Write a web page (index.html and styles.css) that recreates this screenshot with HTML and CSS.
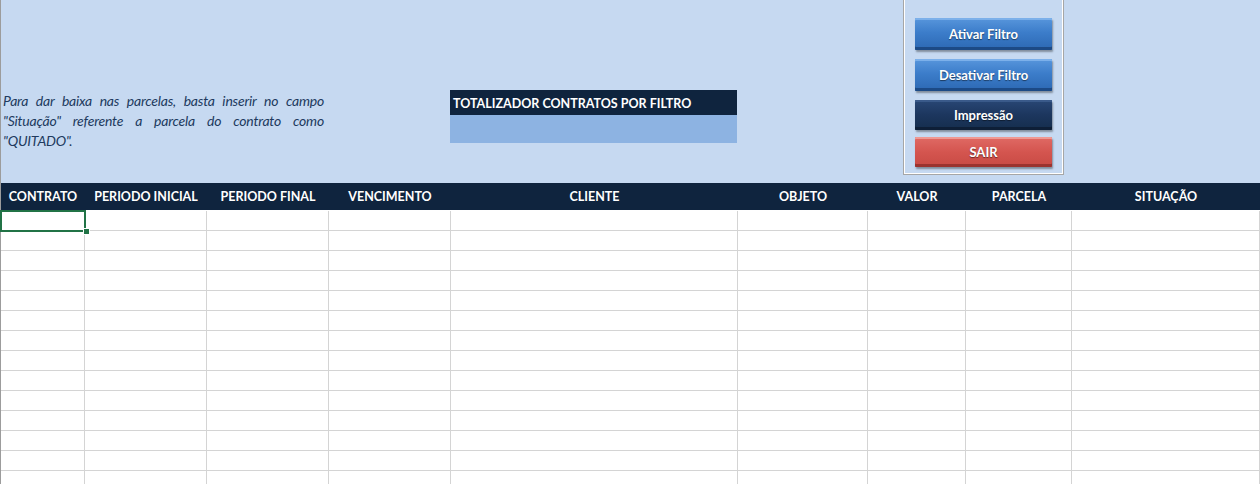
FILE: index.html
```html
<!DOCTYPE html>
<html lang="pt">
<head>
<meta charset="utf-8">
<title>Controle de Contratos</title>
<link rel="stylesheet" href="styles.css">
</head>
<body>
<div class="sheet">
  <div class="top">
    <p class="note">Para dar baixa nas parcelas, basta inserir no campo "Situação" referente a parcela do contrato como "QUITADO".</p>
    <div class="total">
      <div class="total-title">TOTALIZADOR CONTRATOS POR FILTRO</div>
      <div class="total-value"></div>
    </div>
    <div class="panel">
      <button class="btn btn-blue b1">Ativar Filtro</button>
      <button class="btn btn-blue b2">Desativar Filtro</button>
      <button class="btn btn-navy b3">Impressão</button>
      <button class="btn btn-red b4">SAIR</button>
    </div>
  </div>
  <div class="grid head">
    <div class="hc">CONTRATO</div>
    <div class="hc">PERIODO INICIAL</div>
    <div class="hc">PERIODO FINAL</div>
    <div class="hc">VENCIMENTO</div>
    <div class="hc">CLIENTE</div>
    <div class="hc">OBJETO</div>
    <div class="hc">VALOR</div>
    <div class="hc">PARCELA</div>
    <div class="hc">SITUAÇÃO</div>
  </div>
  <div class="grid body" id="body"></div>
</div>
<script>
  var b = document.getElementById('body');
  var html = '';
  for (var r = 0; r < 14; r++) {
    for (var c = 0; c < 9; c++) {
      html += '<div class="cell' + (r === 0 && c === 0 ? ' sel' : '') + '"></div>';
    }
  }
  b.innerHTML = html;
</script>
</body>
</html>
```
FILE: styles.css
```css
html, body {
  margin: 0;
  padding: 0;
  background: #ffffff;
  height: 484px;
  overflow: hidden;
}
.sheet {
  border-left: 1px solid #9c9c9c;
  height: 484px;
  font-family: Lato, "Open Sans", sans-serif;
}
.top {
  display: flex;
  align-items: flex-start;
  height: 183px;
  background: #c6d9f1;
}
.note {
  margin: 91px 0 0 2px;
  width: 321px;
  font-style: italic;
  font-size: 14px;
  letter-spacing: -0.2px;
  word-spacing: 0.5px;
  line-height: 20px;
  color: #213a5e;
  text-align: justify;
}
.total {
  margin: 90px 0 0 126px;
  width: 287px;
}
.total-title {
  height: 25px;
  box-sizing: border-box;
  padding: 2px 0 0 3px;
  background: #0f243e;
  color: #fff;
  font-weight: bold;
  font-size: 12.5px;
  line-height: 23px;
}
.total-value {
  height: 28px;
  background: #8db3e2;
}
.panel {
  margin-left: 166px;
  width: 161px;
  height: 175px;
  box-sizing: border-box;
  border: 1px solid #a6a6a6;
  border-top: none;
  box-shadow: inset 1px 0 0 #ffffff, inset -1px -1px 0 #ffffff;
  display: flex;
  flex-direction: column;
  padding: 18px 0 0 11px;
}
.btn {
  width: 137px;
  border: none;
  padding: 0;
  font-family: Lato, "Open Sans", sans-serif;
  font-weight: bold;
  font-size: 13px;
  color: #ffffff;
  text-shadow: 0 1px 1px rgba(0,0,0,0.5);
  border-radius: 1px;
}
.btn-blue {
  height: 32px;
  background: linear-gradient(#5896dc 0%, #3c7dca 45%, #2c68b3 100%);
  box-shadow: inset 0 2px 0 #7cb0ea, inset 0 -3px 0 #1c4a86, 1px 2px 2px rgba(0,0,0,0.35);
}
.btn-navy {
  height: 30px;
  background: linear-gradient(#294775 0%, #1c365e 50%, #152e4d 100%);
  box-shadow: inset 0 2px 0 #3a5a8a, inset 0 -3px 0 #0e1f37, 1px 2px 2px rgba(0,0,0,0.35);
}
.btn-red {
  height: 30px;
  background: linear-gradient(#e06a65 0%, #d4554f 50%, #c84a44 100%);
  box-shadow: inset 0 2px 0 #ee9893, inset 0 -3px 0 #9b332f, 1px 2px 2px rgba(0,0,0,0.35);
}
.b2 { margin-top: 9px; }
.b3 { margin-top: 9px; }
.b4 { margin-top: 7px; }
.grid {
  display: grid;
  grid-template-columns: 84px 122px 122px 122px 287px 130px 98px 106px 1fr;
}
.head {
  height: 27px;
  background: #0f243e;
}
.hc {
  color: #ffffff;
  font-weight: bold;
  font-size: 12.5px;
  line-height: 28px;
  text-align: center;
  white-space: nowrap;
}
.body {
  grid-auto-rows: 20px;
  padding-top: 1px;
}
.cell {
  box-sizing: border-box;
  border-right: 1px solid #d4d4d4;
  border-bottom: 1px solid #d4d4d4;
}
.sel {
  position: relative;
}
.sel::before {
  content: "";
  position: absolute;
  left: -1px;
  top: -1px;
  width: 86px;
  height: 22px;
  box-sizing: border-box;
  border: 2px solid #217346;
}
.sel::after {
  content: "";
  position: absolute;
  left: 82px;
  top: 17px;
  width: 5px;
  height: 5px;
  background: #217346;
  border: 1px solid #ffffff;
}
```
